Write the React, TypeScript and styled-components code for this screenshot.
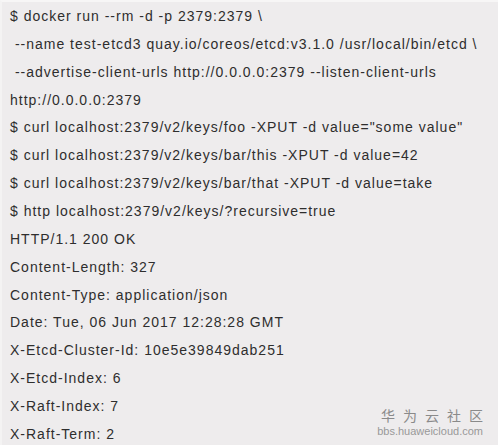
import React from "react";
import styled, { createGlobalStyle } from "styled-components";

const Global = createGlobalStyle`
  html, body { margin: 0; padding: 0; background: #eeeced; }
  #root { width: 498px; height: 445px; overflow: hidden; }
`;

const Panel = styled.div`
  position: relative;
  width: 498px;
  height: 445px;
  box-sizing: border-box;
  background: #eeeced;
  border-top: 2px solid #f7f6f6;
  border-left: 2px solid #f4f3f3;
  padding: 1px 0 0 8px;
  font-family: "Liberation Sans", Arial, sans-serif;
  font-size: 14px;
  letter-spacing: 1px;
  color: #2e2e2e;
`;

const Line = styled.div`
  height: 27.87px;
  line-height: 27.87px;
  white-space: pre;
`;

const Mark = styled.div`
  position: absolute;
  right: 15px;
  bottom: 8px;
  display: flex;
  flex-direction: column;
  align-items: flex-end;
  color: #8a8a8a;
  letter-spacing: 0;
`;

const MarkTitle = styled.div`
  font-family: "Noto Sans CJK SC", sans-serif;
  font-size: 14px;
  letter-spacing: 8px;
  margin-right: -8px;
  line-height: 20px;
`;

const MarkUrl = styled.div`
  font-family: "Liberation Sans", Arial, sans-serif;
  font-size: 11px;
  line-height: 12px;
  color: #999;
`;

const lines = [
  "$ docker run --rm -d -p 2379:2379 \\",
  " --name test-etcd3 quay.io/coreos/etcd:v3.1.0 /usr/local/bin/etcd \\",
  " --advertise-client-urls http://0.0.0.0:2379 --listen-client-urls",
  "http://0.0.0.0:2379",
  '$ curl localhost:2379/v2/keys/foo -XPUT -d value="some value"',
  "$ curl localhost:2379/v2/keys/bar/this -XPUT -d value=42",
  "$ curl localhost:2379/v2/keys/bar/that -XPUT -d value=take",
  "$ http localhost:2379/v2/keys/?recursive=true",
  "HTTP/1.1 200 OK",
  "Content-Length: 327",
  "Content-Type: application/json",
  "Date: Tue, 06 Jun 2017 12:28:28 GMT",
  "X-Etcd-Cluster-Id: 10e5e39849dab251",
  "X-Etcd-Index: 6",
  "X-Raft-Index: 7",
  "X-Raft-Term: 2",
];

export default function App() {
  return (
    <>
      <Global />
      <Panel>
        {lines.map((l, i) => (
          <Line key={i}>{l}</Line>
        ))}
        <Mark>
          <MarkTitle>华为云社区</MarkTitle>
          <MarkUrl>bbs.huaweicloud.com</MarkUrl>
        </Mark>
      </Panel>
    </>
  );
}
